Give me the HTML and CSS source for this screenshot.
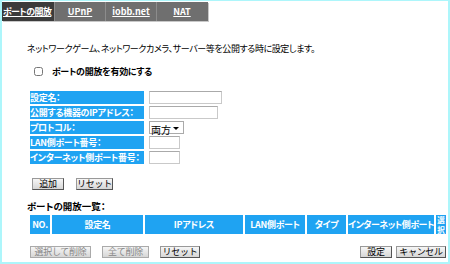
FILE: index.html
```html
<!DOCTYPE html>
<html lang="ja">
<head>
    <meta charset="UTF-8">
    <title>ポートの開放</title>
    <link rel="stylesheet" href="styles.css">
</head>
<body>
    <div class="frame">
        <div class="tabs">
            <a class="tab active" href="#">ポートの開放</a>
            <a class="tab" href="#">UPnP</a>
            <a class="tab" href="#">iobb.net</a>
            <a class="tab" href="#">NAT</a>
        </div>

        <div class="content">
            <p class="desc">ネットワークゲーム、ネットワークカメラ、サーバー等を公開する時に設定します。</p>

            <label class="enable">
                <input type="checkbox">
                <span>ポートの開放を有効にする</span>
            </label>

            <div class="form">
                <div class="label">設定名：</div>
                <input class="field w-name" type="text">

                <div class="label">公開する機器のIPアドレス：</div>
                <input class="field w-ip" type="text">

                <div class="label">プロトコル：</div>
                <span class="select-box">
                    <select class="proto">
                        <option>両方</option>
                        <option>TCP</option>
                        <option>UDP</option>
                    </select>
                </span>

                <div class="label">LAN側ポート番号：</div>
                <input class="field w-port" type="text">

                <div class="label">インターネット側ポート番号：</div>
                <input class="field w-port" type="text">
            </div>

            <div class="actions">
                <button class="btn w-add">追加</button>
                <button class="btn w-clr">リセット</button>
            </div>

            <p class="list-title">ポートの開放一覧：</p>

            <div class="list-head">
                <div class="col c-no">NO.</div>
                <div class="col c-name">設定名</div>
                <div class="col c-ip">IPアドレス</div>
                <div class="col c-lan">LAN側ポート</div>
                <div class="col c-type">タイプ</div>
                <div class="col c-wan">インターネット側ポート</div>
                <div class="col c-sel">選<br>択</div>
            </div>

            <div class="footer">
                <button class="btn off w-del">選択して削除</button>
                <button class="btn off w-all">全て削除</button>
                <button class="btn w-reset">リセット</button>
                <div class="spacer"></div>
                <button class="btn w-save">設定</button>
                <button class="btn w-cancel">キャンセル</button>
            </div>
        </div>
    </div>
</body>
</html>
```

FILE: styles.css
```css
* {
    margin: 0;
    padding: 0;
    box-sizing: border-box;
}

body {
    font-family: "Noto Sans CJK JP", "DejaVu Sans", sans-serif;
    font-size: 10px;
    color: #000;
    background: #fff;
    font-feature-settings: "palt";
}

.frame {
    width: 450px;
    height: 264px;
    border: 2px solid #adf6fb;
    border-top-width: 1px;
    padding-top: 1px;
    overflow: hidden;
}

/* タブ */
.tabs {
    display: flex;
    width: 206px;
    height: 19px;
    background: #6f6f6f;
    box-shadow: 1px 1px 0 #c8c8c8;
}

.tab {
    width: 51px;
    line-height: 19px;
    text-align: center;
    color: #fff;
    font-weight: bold;
    font-size: 9px;
    text-decoration: underline;
    border-left: 1px solid #8c8c8c;
}

.tab.active {
    width: 52px;
    background: #3b3b3b;
    border-left: none;
    text-align: left;
    padding-left: 1px;
    letter-spacing: -0.6px;
    white-space: nowrap;
}

.content {
    padding-left: 25px;
}

.desc {
    margin-top: 22px;
    line-height: 12px;
    font-size: 9px;
    letter-spacing: -0.4px;
}

.enable {
    display: flex;
    align-items: center;
    margin-top: 10px;
    margin-left: 7px;
    font-weight: bold;
    font-size: 9px;
    letter-spacing: -0.3px;
}

.enable input {
    width: 9px;
    height: 9px;
    margin-right: 9px;
}

/* 入力フォーム */
.form {
    display: grid;
    grid-template-columns: 114px auto;
    column-gap: 5px;
    row-gap: 2px;
    justify-items: start;
    margin-top: 13px;
    margin-left: 3px;
}

.label {
    background: #1fa3f2;
    color: #fff;
    font-weight: bold;
    font-size: 9px;
    height: 13px;
    line-height: 13px;
    width: 114px;
    white-space: nowrap;
    overflow: hidden;
    letter-spacing: -0.3px;
}

.field {
    height: 13px;
    border: 1px solid #c9c9c9;
    border-top-color: #aaa;
    background: #fff;
}

.w-name { width: 73px; }
.w-ip { width: 69px; }
.w-port { width: 31px; }

.select-box {
    position: relative;
    display: inline-block;
    width: 35px;
    height: 13px;
    border: 1px solid #aaa;
    background: #fff;
}

.select-box::after {
    content: "";
    position: absolute;
    right: 4px;
    top: 5px;
    border-left: 3px solid transparent;
    border-right: 3px solid transparent;
    border-top: 3px solid #000;
}

.proto {
    appearance: none;
    -webkit-appearance: none;
    border: none;
    background: transparent;
    font-family: inherit;
    font-size: 10px;
    line-height: 11px;
    height: 11px;
    width: 33px;
    padding-left: 1px;
    outline: none;
}

/* ボタン */
.btn {
    height: 12px;
    padding: 0;
    font-family: inherit;
    font-size: 9px;
    line-height: 10px;
    color: #000;
    border: 1px solid #555;
    border-top-color: #999;
    border-left-color: #999;
    background: linear-gradient(#f6f6f6, #d6d6d6);
    white-space: nowrap;
    letter-spacing: -0.3px;
    cursor: pointer;
}

.btn.off {
    color: #888;
    border-color: #aaa;
}

.actions {
    display: flex;
    gap: 12px;
    margin-top: 14px;
    margin-left: 5px;
}

.w-add { width: 32px; }
.w-clr { width: 37px; }

.list-title {
    margin-top: 10px;
    font-weight: bold;
    font-size: 9.5px;
    line-height: 12px;
}

/* 一覧ヘッダー */
.list-head {
    display: flex;
    gap: 2px;
    height: 19px;
    margin-top: 3px;
    margin-left: 3px;
}

.col {
    background: #1fa3f2;
    color: #fff;
    font-weight: bold;
    font-size: 9px;
    display: flex;
    align-items: center;
    justify-content: center;
    white-space: nowrap;
    letter-spacing: -0.3px;
}

.c-no { width: 20px; }
.c-name { width: 91px; }
.c-ip { width: 98px; }
.c-lan { width: 60px; }
.c-type { width: 39px; }
.c-wan { width: 86px; letter-spacing: -0.5px; }
.c-sel {
    width: 10px;
    font-size: 7.5px;
    line-height: 9.5px;
    text-align: center;
    letter-spacing: 0;
}

.footer {
    display: flex;
    align-items: center;
    margin-top: 12px;
    margin-left: 3px;
    width: 416px;
}

.footer .btn { margin-right: 11px; }
.footer .spacer { flex: 1; }

.w-del { width: 61px; }
.w-all { width: 47px; }
.w-reset { width: 40px; }
.footer .w-save { width: 32px; margin-right: 4px; }
.footer .w-cancel { width: 50px; margin-right: 0; }
```
